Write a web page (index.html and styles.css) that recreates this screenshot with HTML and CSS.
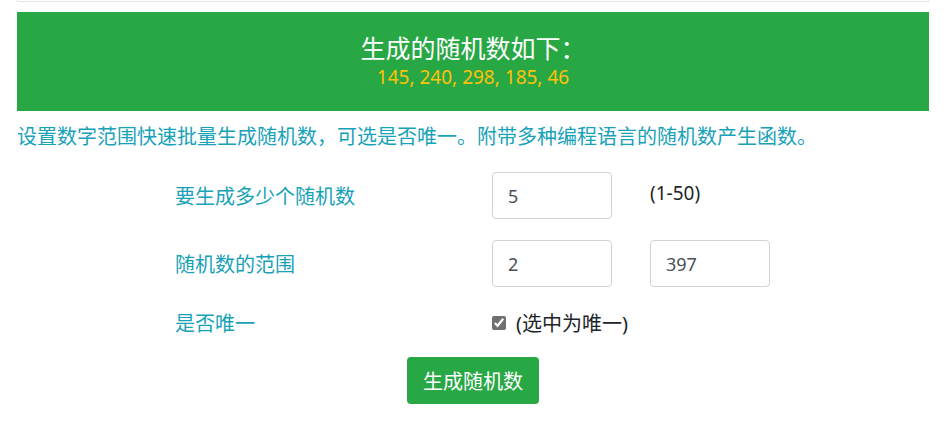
FILE: index.html
```html
<!DOCTYPE html>
<html>
<head>
  <title>随机数生成器</title>
  <link rel="stylesheet" href="styles.css">
</head>
<body>
  <div class="container">
    <div class="top-box"></div>

    <div class="result-banner">
      <div class="result-title">生成的随机数如下：</div>
      <div class="result-numbers">145, 240, 298, 185, 46</div>
    </div>

    <p class="intro">设置数字范围快速批量生成随机数，可选是否唯一。附带多种编程语言的随机数产生函数。</p>

    <form class="gen-form" onsubmit="return false;">
      <label class="form-label" for="count">要生成多少个随机数</label>
      <input class="form-input" id="count" type="text" value="5">
      <span class="hint">(1-50)</span>

      <label class="form-label" for="min">随机数的范围</label>
      <input class="form-input" id="min" type="text" value="2">
      <input class="form-input" id="max" type="text" value="397">

      <span class="form-label">是否唯一</span>
      <label class="check-wrap"><input type="checkbox" class="check" checked> (选中为唯一)</label>
    </form>

    <div class="actions">
      <button class="button">生成随机数</button>
    </div>
  </div>
</body>
</html>
```

FILE: styles.css
```css
body {
  margin: 0;
  font-family: "Noto Sans", "Noto Sans CJK SC", sans-serif;
  color: #212529;
  background: #fff;
}
.container {
  width: 912px;
  margin-left: 17px;
}
.top-box {
  height: 1px;
  border: 1px solid #e6e6e6;
  border-top: none;
}
.result-banner {
  margin-top: 10px;
  background-color: #28a745;
  text-align: center;
  padding: 19px 0 21px;
}
.result-title {
  color: #fff;
  font-size: 25px;
  line-height: 34px;
}
.result-numbers {
  color: #ffc107;
  font-size: 19px;
  line-height: 25px;
}
.intro {
  margin: 11px 0 0;
  color: #17a2b8;
  font-size: 20px;
  line-height: 30px;
}
.gen-form {
  display: grid;
  grid-template-columns: 279px 120px 120px;
  column-gap: 38px;
  row-gap: 21px;
  align-items: center;
  padding-left: 158px;
  margin-top: 20px;
}
.form-label {
  color: #17a2b8;
  font-size: 20px;
}
.form-input {
  box-sizing: border-box;
  width: 120px;
  height: 47px;
  padding: 0 15px;
  border: 1px solid #ced4da;
  border-radius: 4px;
  font-family: inherit;
  font-size: 18px;
  color: #495057;
}
.hint {
  font-size: 19px;
  margin-top: -6px;
}
.check-wrap {
  grid-column: span 2;
  font-size: 20px;
  display: flex;
  align-items: center;
  gap: 10px;
}
.check {
  width: 14px;
  height: 14px;
  margin: 0;
  accent-color: #707070;
}
.actions {
  text-align: center;
  margin-top: 20px;
}
.button {
  background-color: #28a745;
  border: none;
  color: white;
  height: 47px;
  padding: 0 16px;
  font-family: inherit;
  font-size: 20px;
  border-radius: 4px;
  cursor: pointer;
}
```
